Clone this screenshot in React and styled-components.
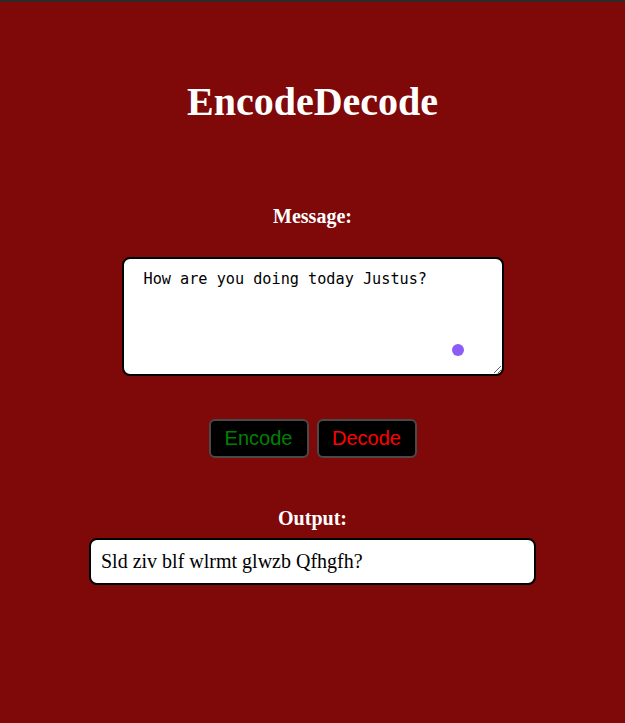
import React, { useState } from "react"
import styled, { createGlobalStyle } from "styled-components"

const GlobalStyle = createGlobalStyle`
  html, body {
    margin: 0;
    padding: 0;
    background: #7f0808;
  }
`

const Page = styled.main`
  min-height: 100vh;
  box-sizing: border-box;
  border-top: 2px solid #2e2a2a;
  background: #7f0808;
  display: flex;
  flex-direction: column;
  align-items: center;
  font-family: "Liberation Serif", "Times New Roman", serif;
  color: #fff;
`

const Title = styled.h1`
  margin: 77px 0 0;
  font-size: 40px;
  line-height: 46px;
  font-weight: bold;
`

const Label = styled.h3`
  margin: ${(p) => p.$top}px 0 0;
  font-size: 20px;
  line-height: 23px;
  font-weight: bold;
`

const FieldWrap = styled.div`
  position: relative;
  margin-top: 29px;
`

const MessageInput = styled.textarea`
  display: block;
  box-sizing: border-box;
  width: 382px;
  height: 119px;
  padding: 11px 20px;
  border: 2px solid #000;
  border-radius: 8px;
  background: #fff;
  font-family: "DejaVu Sans Mono", "Liberation Mono", monospace;
  font-size: 15.2px;
  line-height: 18px;
  color: #000;
  outline: none;
`

const Dot = styled.span`
  position: absolute;
  left: 330px;
  top: 87px;
  width: 12px;
  height: 12px;
  border-radius: 50%;
  background: #8b5cf6;
`

const ButtonRow = styled.div`
  display: flex;
  gap: 8px;
  margin-top: 43px;
`

const Button = styled.button`
  box-sizing: border-box;
  width: 100px;
  height: 39px;
  background: #000;
  border: 2px solid #4a4a4a;
  border-radius: 6px;
  font-family: "Liberation Sans", Arial, sans-serif;
  font-size: 20px;
  color: ${(p) => p.$tone};
  cursor: pointer;
`

const Output = styled.div`
  box-sizing: border-box;
  width: 447px;
  height: 47px;
  margin-top: 8px;
  padding: 10px 10px;
  border: 2px solid #000;
  border-radius: 8px;
  background: #fff;
  color: #000;
  font-size: 20px;
  line-height: 23px;
`

const atbash = (s) =>
  s.replace(/[a-z]/gi, (c) => {
    const base = c <= "Z" ? 65 : 97
    return String.fromCharCode(base + 25 - (c.charCodeAt(0) - base))
  })

export default function App() {
  const [msg, setMsg] = useState("How are you doing today Justus?")
  const [out, setOut] = useState("Sld ziv blf wlrmt glwzb Qfhgfh?")
  return (
    <>
      <GlobalStyle />
      <Page>
        <Title>EncodeDecode</Title>
        <Label $top={80}>Message:</Label>
        <FieldWrap>
          <MessageInput value={msg} onChange={(e) => setMsg(e.target.value)} />
          <Dot />
        </FieldWrap>
        <ButtonRow>
          <Button $tone="#008000" onClick={() => setOut(atbash(msg))}>
            Encode
          </Button>
          <Button $tone="#ff0000" onClick={() => setOut(atbash(msg))}>
            Decode
          </Button>
        </ButtonRow>
        <Label $top={49}>Output:</Label>
        <Output>{out}</Output>
      </Page>
    </>
  )
}
